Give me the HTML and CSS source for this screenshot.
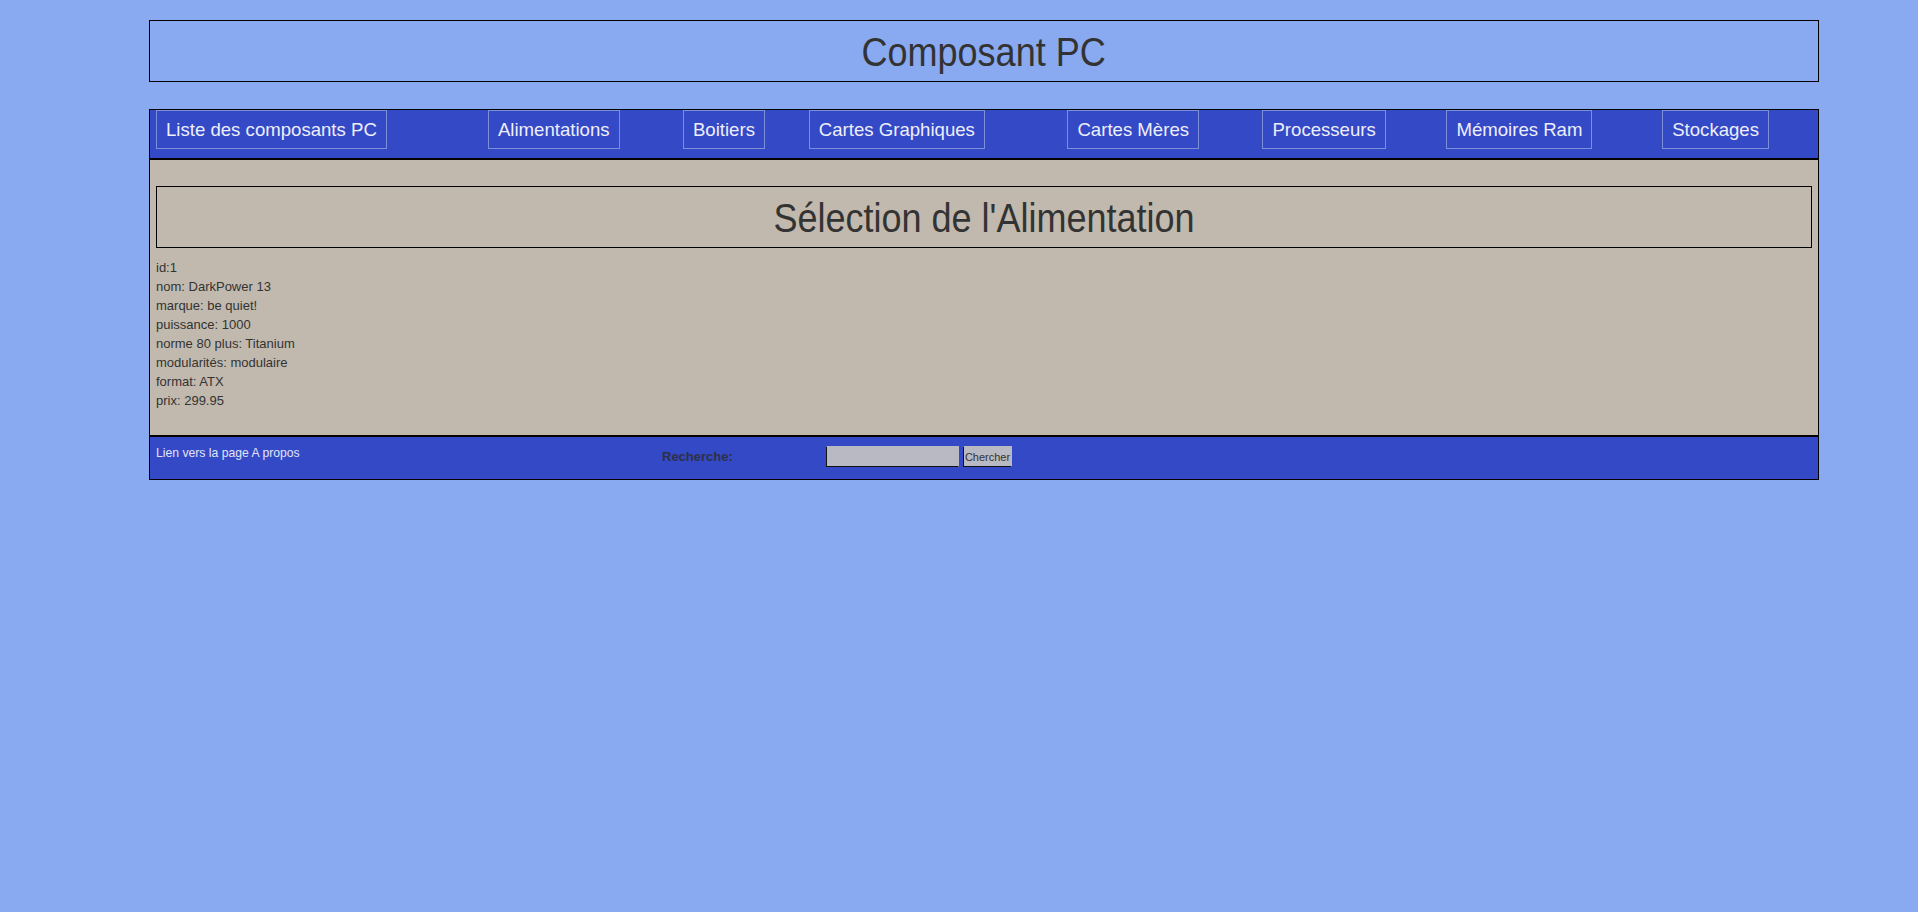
FILE: index.html
```html
<!DOCTYPE html>
<html lang="fr">
<head>
<meta charset="utf-8">
<title>Composant PC</title>
<link rel="stylesheet" href="styles.css">
</head>
<body>
<div class="page">
  <header class="site-header">
    <h1 class="site-title"><span class="narrow">Composant PC</span></h1>
  </header>
  <nav class="main-nav">
    <ul class="nav-list">
      <li class="nav-item"><a class="nav-link" href="#">Liste des composants PC</a></li>
      <li class="nav-item"><a class="nav-link" href="#">Alimentations</a></li>
      <li class="nav-item"><a class="nav-link" href="#">Boitiers</a></li>
      <li class="nav-item"><a class="nav-link" href="#">Cartes Graphiques</a></li>
      <li class="nav-item"><a class="nav-link" href="#">Cartes Mères</a></li>
      <li class="nav-item"><a class="nav-link" href="#">Processeurs</a></li>
      <li class="nav-item"><a class="nav-link" href="#">Mémoires Ram</a></li>
      <li class="nav-item"><a class="nav-link" href="#">Stockages</a></li>
    </ul>
  </nav>
  <main class="content">
    <h2 class="section-title"><span class="narrow">Sélection de l'Alimentation</span></h2>
    <div class="details">
      <div class="detail">id:1</div>
      <div class="detail">nom: DarkPower 13</div>
      <div class="detail">marque: be quiet!</div>
      <div class="detail">puissance: 1000</div>
      <div class="detail">norme 80 plus: Titanium</div>
      <div class="detail">modularités: modulaire</div>
      <div class="detail">format: ATX</div>
      <div class="detail">prix: 299.95</div>
    </div>
  </main>
  <footer class="site-footer">
    <a class="footer-link" href="#">Lien vers la page A propos</a>
    <label class="search-label" for="q">Recherche:</label>
    <form class="search-form">
      <input class="search-input" id="q" type="text">
      <button class="search-button" type="button">Chercher</button>
    </form>
  </footer>
</div>
</body>
</html>
```
FILE: styles.css
```css
* {
  box-sizing: border-box;
}

html, body {
  margin: 0;
  padding: 0;
  background: #89a9f0;
}

body {
  font-family: "Liberation Sans", Arial, sans-serif;
  color: #333333;
}

.page {
  width: 1670px;
  margin: 20px 0 0 149px;
}

.narrow {
  display: inline-block;
  transform: scaleX(0.9);
  transform-origin: center;
  white-space: nowrap;
}

.site-header {
  height: 62px;
  border: 1px solid #000;
  display: flex;
  align-items: center;
  justify-content: center;
}

.site-title {
  margin: 0;
  padding-top: 1px;
  font-family: "Liberation Sans", Arial, sans-serif;
  font-weight: normal;
  font-size: 40px;
  line-height: 46px;
  color: #333333;
}

.main-nav {
  margin-top: 27px;
  height: 50px;
  border: 1px solid #000;
  background: #3349c6;
}

.nav-list {
  list-style: none;
  margin: 0;
  padding: 0;
  display: grid;
  grid-template-columns: 240fr 141fr 91fr 187fr 141fr 133fr 156fr 117fr;
  align-items: start;
}

.nav-item {
  padding: 0 6px;
}

.nav-link {
  display: inline-block;
  padding: 8px 9px;
  border: 1px solid #7b90d9;
  font-size: 18.6px;
  line-height: 21px;
  color: #eeeefc;
  text-decoration: none;
  white-space: nowrap;
}

.content {
  height: 277px;
  border: 1px solid #000;
  background: #c1b9ad;
  padding: 0 6px;
}

.section-title {
  margin: 26px 0 0;
  height: 62px;
  border: 1px solid #000;
  display: flex;
  align-items: center;
  justify-content: center;
  padding-top: 1px;
  font-family: "Liberation Sans", Arial, sans-serif;
  font-weight: normal;
  font-size: 40px;
  line-height: 46px;
  color: #333333;
}

.details {
  margin-top: 10px;
  font-size: 13px;
  line-height: 19px;
  color: #333333;
}

.site-footer {
  height: 44px;
  border: 1px solid #000;
  background: #3349c6;
  padding: 9px 6px 0;
  display: grid;
  grid-template-columns: 506px 164px auto;
  align-items: start;
}

.footer-link {
  font-size: 12.2px;
  line-height: 14px;
  color: #e4e4f6;
  text-decoration: none;
}

.search-label {
  font-size: 13px;
  font-weight: bold;
  line-height: 15px;
  color: #2f2f45;
  margin-top: 3px;
}

.search-form {
  display: flex;
  gap: 4px;
  margin: 0;
}

.search-input {
  width: 133px;
  height: 21px;
  margin: 0;
  padding: 0 3px;
  background: #b9b9c3;
  border: 1px solid #b9b9c3;
  border-left-color: #111;
  border-bottom-color: #111;
  font-family: "Liberation Sans", Arial, sans-serif;
  font-size: 11px;
}

.search-button {
  width: 49px;
  height: 21px;
  margin: 0;
  padding: 0;
  background: #b9b9c3;
  border: 1px solid #b9b9c3;
  border-left-color: #111;
  border-bottom-color: #111;
  font-family: "Liberation Sans", Arial, sans-serif;
  font-size: 11px;
  color: #333;
}
```
